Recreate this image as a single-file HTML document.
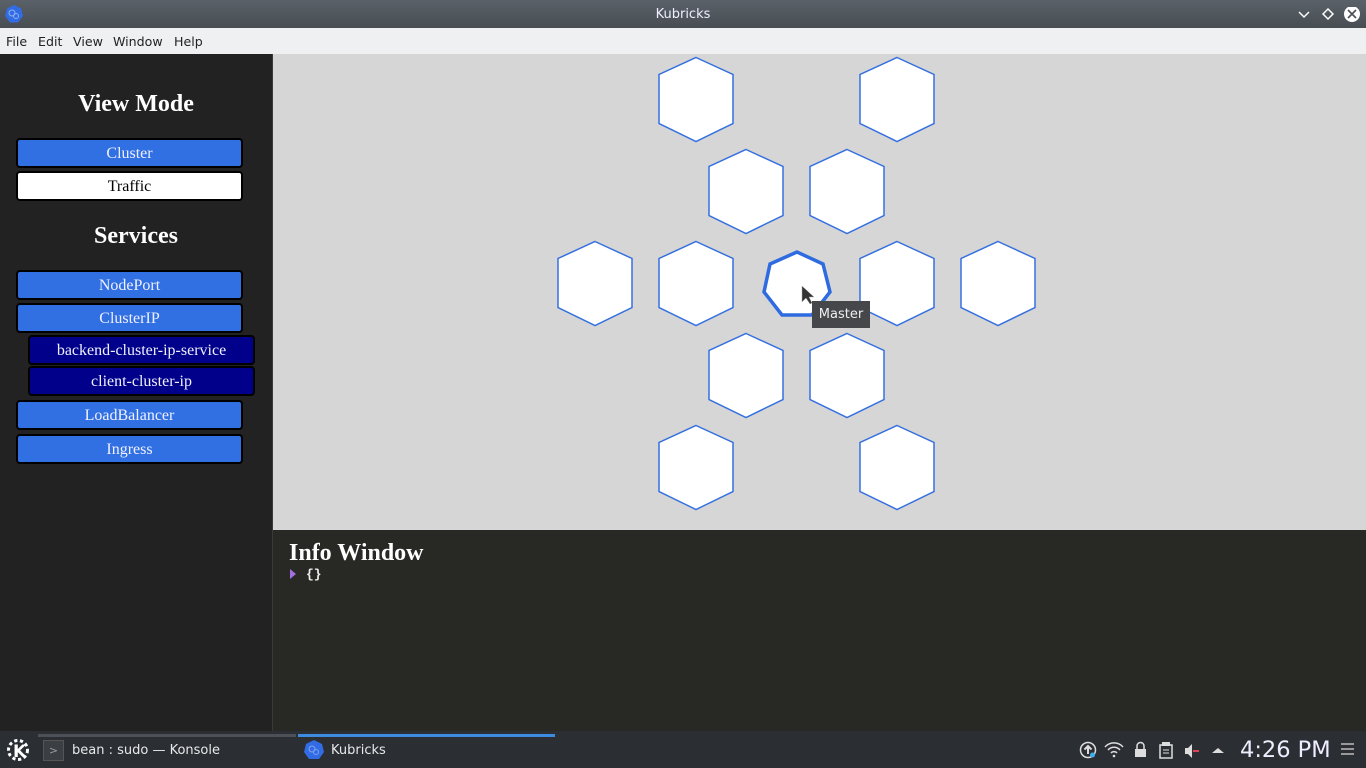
<!DOCTYPE html>
<html><head><meta charset="utf-8"><style>
*{margin:0;padding:0;box-sizing:border-box}
body{width:1366px;height:768px;overflow:hidden;position:relative;background:#222;font-family:"Liberation Sans",sans-serif}
.abs{position:absolute}
#title{left:0;top:0;width:1366px;height:28px;background:linear-gradient(#5a6168,#474d53);color:#eef;font-family:"DejaVu Sans",sans-serif;font-size:13px;text-align:center;line-height:29px}
#menu{left:0;top:28px;width:1366px;height:26px;background:#eff0f1;font-family:"DejaVu Sans",sans-serif;font-size:12.6px;color:#222;line-height:27px}
#menu span{position:absolute;top:0}
#side{left:0;top:54px;width:273px;height:677px;background:#222222;border-right:1px solid #3a3a3a}
h2{font-family:"Liberation Serif",serif;color:#fff;font-size:24px;font-weight:bold;text-align:center;position:absolute;width:272px}
.b{position:absolute;left:16px;width:227px;height:30px;border:2px solid #000;border-radius:4px;background:#3170e3;color:#f0f0ff;font-family:"Liberation Serif",serif;font-size:16px;text-align:center;line-height:28px}
.d{left:28px;background:#00008b}
#main{left:273px;top:54px;width:1093px;height:476px;background:#d6d6d6}
#info{left:273px;top:530px;width:1093px;height:201px;background:#282825}
#task{left:0;top:731px;width:1366px;height:37px;background:#2b2f34;color:#e8e8e8;font-family:"DejaVu Sans",sans-serif;font-size:13px}
</style></head><body>
<div id="title" class="abs">Kubricks
<svg class="abs" style="left:4px;top:4px" width="20" height="20" viewBox="0 0 20 20"><polygon points="10,1 17,4.5 19,12 14,18.5 6,18.5 1,12 3,4.5" fill="#326ce5"/><circle cx="8" cy="9" r="3" fill="none" stroke="#8fb0f0"/><circle cx="12" cy="12" r="2.5" fill="none" stroke="#8fb0f0"/></svg>
<svg class="abs" style="left:1296px;top:7px" width="64" height="16"><path d="M3 5l5 5 5-5" stroke="#fff" stroke-width="1.5" fill="none"/><path d="M32 2l5 5-5 5-5-5z" stroke="#fff" stroke-width="1.5" fill="none"/><circle cx="56" cy="7" r="8" fill="#fff"/><path d="M52 3l8 8M60 3l-8 8" stroke="#4a5056" stroke-width="1.6"/></svg>
</div>
<div id="menu" class="abs"><span style="left:6px">File</span><span style="left:38px">Edit</span><span style="left:73px">View</span><span style="left:113px">Window</span><span style="left:174px">Help</span></div>
<div id="side" class="abs">
<h2 style="top:37px">View Mode</h2>
<h2 style="top:169px">Services</h2>
</div>
<div class="b" style="top:138px">Cluster</div>
<div class="b" style="top:171px;background:#fff;color:#000">Traffic</div>
<div class="b" style="top:270px">NodePort</div>
<div class="b" style="top:303px">ClusterIP</div>
<div class="b d" style="top:335px">backend-cluster-ip-service</div>
<div class="b d" style="top:366px">client-cluster-ip</div>
<div class="b" style="top:400px">LoadBalancer</div>
<div class="b" style="top:434px">Ingress</div>
<div id="main" class="abs"></div>
<svg class="abs" style="left:0;top:0" width="1366" height="530">
<defs><polygon id="h" points="0,-42 37,-25 37,24 0,42 -37,24 -37,-25" fill="#fff" stroke="#3570e0" stroke-width="1.5"/></defs>
<use href="#h" x="696" y="99.5"/><use href="#h" x="897" y="99.5"/>
<use href="#h" x="746" y="191.5"/><use href="#h" x="847" y="191.5"/>
<use href="#h" x="595" y="283.5"/><use href="#h" x="696" y="283.5"/><use href="#h" x="897" y="283.5"/><use href="#h" x="998" y="283.5"/>
<use href="#h" x="746" y="375.5"/><use href="#h" x="847" y="375.5"/>
<use href="#h" x="696" y="467.5"/><use href="#h" x="897" y="467.5"/>
<polygon points="797,252 770,264 764,292 782,315 812,315 830,292 823,264" fill="#fff" stroke="#2f6be0" stroke-width="3.5"/>
<path d="M802,286 L802,302 L806,298 L810,304 L812,303 L809,297 L814,297 Z" fill="#333" stroke="#aaa" stroke-width=".5"/>
</svg>
<div class="abs" style="left:812px;top:301px;width:58px;height:27px;background:#45474b;color:#eee;font-family:'DejaVu Sans',sans-serif;font-size:13px;line-height:28px;text-align:center">Master</div>
<div id="info" class="abs">
<div class="abs" style="left:16px;top:10px;color:#fff;font-family:'Liberation Serif',serif;font-weight:bold;font-size:24px">Info Window</div>
<svg class="abs" style="left:17px;top:39px" width="6" height="10"><path d="M0 0L6 5L0 10Z" fill="#a070e0"/></svg>
<div class="abs" style="left:33px;top:37px;color:#eee;font-family:'Liberation Mono',monospace;font-size:13px;font-weight:bold">{}</div>
</div>
<div id="task" class="abs">
<div class="abs" style="left:38px;top:3px;width:258px;height:3px;background:#4d5157"></div>
<div class="abs" style="left:298px;top:3px;width:257px;height:3px;background:#3d8be0"></div>
<svg class="abs" style="left:5px;top:6px" width="26" height="26" viewBox="0 0 26 26"><circle cx="13" cy="13" r="9" fill="none" stroke="#fff" stroke-width="4" stroke-dasharray="3 2.5"/><circle cx="13" cy="13" r="8" fill="#2b2f34"/><text x="8" y="20" fill="#fff" font-family="DejaVu Sans" font-weight="bold" font-size="17">K</text></svg>
<div class="abs" style="left:43px;top:9px;width:21px;height:21px;background:#3a3f44;border:1px solid #555;color:#999;font-size:11px;text-align:center;line-height:19px">&gt;</div>
<div class="abs" style="left:72px;top:12px">bean : sudo — Konsole</div>
<svg class="abs" style="left:303px;top:8px" width="22" height="22"><polygon points="11,1 19,5 21,13 16,20 6,20 1,13 3,5" fill="#326ce5"/><circle cx="9" cy="10" r="3" fill="none" stroke="#7fa0ee"/><circle cx="13" cy="13" r="2.5" fill="none" stroke="#7fa0ee"/></svg>
<div class="abs" style="left:331px;top:12px">Kubricks</div>
<svg class="abs" style="left:1078px;top:8px" width="150" height="22">
<circle cx="10" cy="11" r="7.5" fill="none" stroke="#ddd" stroke-width="1.5"/><path d="M10 15V7M6.5 10.5L10 7l3.5 3.5" stroke="#ddd" stroke-width="2" fill="none"/><circle cx="14.5" cy="16" r="2.5" fill="#3daee9"/>
<path d="M27 8a12 12 0 0 1 18 0M30 11a8 8 0 0 1 12 0M33 14a4 4 0 0 1 6 0" stroke="#ddd" stroke-width="1.5" fill="none"/><circle cx="36" cy="17" r="1.3" fill="#ddd"/>
<path d="M59 10V7a3.5 3.5 0 0 1 7 0v3" stroke="#ddd" stroke-width="1.5" fill="none"/><rect x="57" y="10" width="11" height="8" fill="#ddd"/>
<rect x="82" y="6" width="12" height="13" fill="none" stroke="#ddd" stroke-width="1.5"/><rect x="84" y="3" width="8" height="4" fill="#ddd"/><path d="M85 11h6M85 14h6" stroke="#ddd"/>
<path d="M107 9h3l4-4v14l-4-4h-3z" fill="#ddd"/><path d="M115 12h6" stroke="#da4453" stroke-width="2"/>
<path d="M134 14l6-5 6 5z" fill="#ddd"/>
</svg>
<div class="abs" style="left:1240px;top:6px;font-size:22.5px;color:#eef">4:26 PM</div>
<svg class="abs" style="left:1341px;top:12px" width="14" height="12"><path d="M0 1h13M0 6h13M0 11h13" stroke="#999" stroke-width="2"/></svg>
</div>
</body></html>
